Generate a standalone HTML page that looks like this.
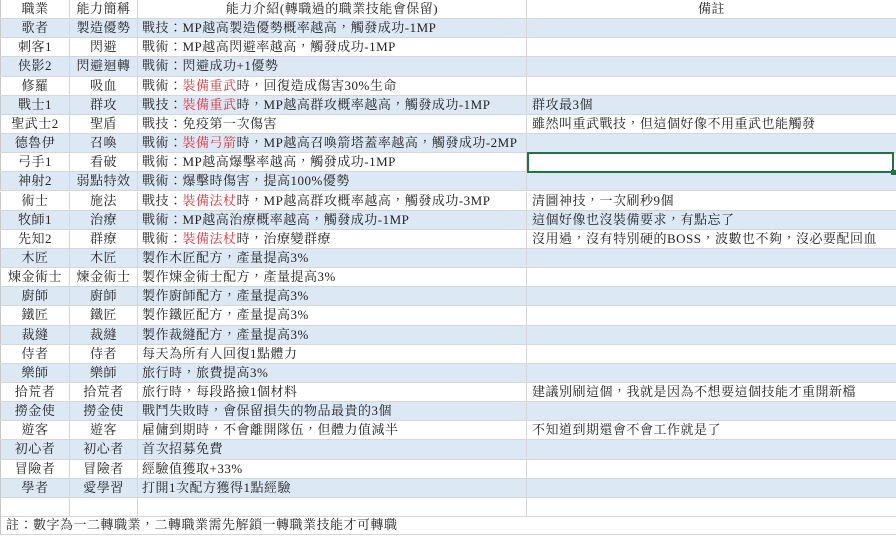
<!DOCTYPE html>
<html><head><meta charset="utf-8">
<style>
body{margin:0;width:896px;height:537px;overflow:hidden;background:#fff;font-family:"Liberation Serif","Noto Serif CJK TC","Noto Serif CJK SC",serif;font-size:13px;color:#222;letter-spacing:0.5px;}
.r{position:absolute;left:0;width:896px;height:19.15px;box-sizing:border-box;border-bottom:1px solid #d6d6d6;}
.b{background:#dde8f5;}
.c{position:absolute;top:0;height:100%;box-sizing:border-box;border-right:1px solid #d6d6d6;line-height:18px;white-space:nowrap;overflow:visible;}
.a{left:0;width:70px;text-align:center;border-left:1px solid #c8c8c8;}
.k{left:70px;width:68px;text-align:center;}
.d{left:138px;width:389px;padding-left:4px;}
.e{left:527px;width:369px;padding-left:5px;border-right:none;}
.red{color:#e0303a;}
.sel{position:absolute;left:527px;top:152px;width:367px;height:21px;border:2px solid #217346;box-sizing:border-box;}
.sel:after{content:"";position:absolute;right:-4px;bottom:-4px;width:5px;height:5px;background:#217346;}
.note{position:absolute;left:0;top:516px;width:896px;height:19px;line-height:18px;padding-left:5px;border-left:1px solid #c8c8c8;border-bottom:1px solid #d6d6d6;box-sizing:border-box;}
.d.h,.e.h{text-align:center;padding-left:0}
</style></head><body>
<div class="r" style="top:0"><div class="c a">職業</div><div class="c k">能力簡稱</div><div class="c d h">能力介紹(轉職過的職業技能會保留)</div><div class="c e h">備註</div></div>
<div class="r b" style="top:19.15px"><div class="c a">歌者</div><div class="c k">製造優勢</div><div class="c d">戰技：MP越高製造優勢概率越高，觸發成功-1MP</div><div class="c e"></div></div>
<div class="r" style="top:38.3px"><div class="c a">刺客1</div><div class="c k">閃避</div><div class="c d">戰術：MP越高閃避率越高，觸發成功-1MP</div><div class="c e"></div></div>
<div class="r b" style="top:57.45px"><div class="c a">侠影2</div><div class="c k">閃避迴轉</div><div class="c d">戰術：閃避成功+1優勢</div><div class="c e"></div></div>
<div class="r" style="top:76.6px"><div class="c a">修羅</div><div class="c k">吸血</div><div class="c d">戰術：<span class="red">裝備重武</span>時，回復造成傷害30%生命</div><div class="c e"></div></div>
<div class="r b" style="top:95.75px"><div class="c a">戰士1</div><div class="c k">群攻</div><div class="c d">戰技：<span class="red">裝備重武</span>時，MP越高群攻概率越高，觸發成功-1MP</div><div class="c e">群攻最3個</div></div>
<div class="r" style="top:114.9px"><div class="c a">聖武士2</div><div class="c k">聖盾</div><div class="c d">戰技：免疫第一次傷害</div><div class="c e">雖然叫重武戰技，但這個好像不用重武也能觸發</div></div>
<div class="r b" style="top:134.05px"><div class="c a">德魯伊</div><div class="c k">召喚</div><div class="c d">戰術：<span class="red">裝備弓箭</span>時，MP越高召喚箭塔蓋率越高，觸發成功-2MP</div><div class="c e"></div></div>
<div class="r" style="top:153.2px"><div class="c a">弓手1</div><div class="c k">看破</div><div class="c d">戰術：MP越高爆擊率越高，觸發成功-1MP</div><div class="c e"></div></div>
<div class="r b" style="top:172.35px"><div class="c a">神射2</div><div class="c k">弱點特效</div><div class="c d">戰術：爆擊時傷害，提高100%優勢</div><div class="c e"></div></div>
<div class="r" style="top:191.5px"><div class="c a">術士</div><div class="c k">施法</div><div class="c d">戰技：<span class="red">裝備法杖</span>時，MP越高群攻概率越高，觸發成功-3MP</div><div class="c e">清圖神技，一次刷秒9個</div></div>
<div class="r b" style="top:210.65px"><div class="c a">牧師1</div><div class="c k">治療</div><div class="c d">戰術：MP越高治療概率越高，觸發成功-1MP</div><div class="c e">這個好像也沒裝備要求，有點忘了</div></div>
<div class="r" style="top:229.8px"><div class="c a">先知2</div><div class="c k">群療</div><div class="c d">戰術：<span class="red">裝備法杖</span>時，治療變群療</div><div class="c e">沒用過，沒有特別硬的BOSS，波數也不夠，沒必要配回血</div></div>
<div class="r b" style="top:248.95px"><div class="c a">木匠</div><div class="c k">木匠</div><div class="c d">製作木匠配方，產量提高3%</div><div class="c e"></div></div>
<div class="r" style="top:268.1px"><div class="c a">煉金術士</div><div class="c k">煉金術士</div><div class="c d">製作煉金術士配方，產量提高3%</div><div class="c e"></div></div>
<div class="r b" style="top:287.25px"><div class="c a">廚師</div><div class="c k">廚師</div><div class="c d">製作廚師配方，產量提高3%</div><div class="c e"></div></div>
<div class="r" style="top:306.4px"><div class="c a">鐵匠</div><div class="c k">鐵匠</div><div class="c d">製作鐵匠配方，產量提高3%</div><div class="c e"></div></div>
<div class="r b" style="top:325.55px"><div class="c a">裁縫</div><div class="c k">裁縫</div><div class="c d">製作裁縫配方，產量提高3%</div><div class="c e"></div></div>
<div class="r" style="top:344.7px"><div class="c a">侍者</div><div class="c k">侍者</div><div class="c d">每天為所有人回復1點體力</div><div class="c e"></div></div>
<div class="r b" style="top:363.85px"><div class="c a">樂師</div><div class="c k">樂師</div><div class="c d">旅行時，旅費提高3%</div><div class="c e"></div></div>
<div class="r" style="top:383px"><div class="c a">拾荒者</div><div class="c k">拾荒者</div><div class="c d">旅行時，每段路撿1個材料</div><div class="c e">建議別刷這個，我就是因為不想要這個技能才重開新檔</div></div>
<div class="r b" style="top:402.15px"><div class="c a">撈金使</div><div class="c k">撈金使</div><div class="c d">戰鬥失敗時，會保留損失的物品最貴的3個</div><div class="c e"></div></div>
<div class="r" style="top:421.3px"><div class="c a">遊客</div><div class="c k">遊客</div><div class="c d">雇傭到期時，不會離開隊伍，但體力值減半</div><div class="c e">不知道到期還會不會工作就是了</div></div>
<div class="r b" style="top:440.45px"><div class="c a">初心者</div><div class="c k">初心者</div><div class="c d">首次招募免費</div><div class="c e"></div></div>
<div class="r" style="top:459.6px"><div class="c a">冒險者</div><div class="c k">冒險者</div><div class="c d">經驗值獲取+33%</div><div class="c e"></div></div>
<div class="r b" style="top:478.75px"><div class="c a">學者</div><div class="c k">愛學習</div><div class="c d">打開1次配方獲得1點經驗</div><div class="c e"></div></div>
<div class="r" style="top:497.9px"><div class="c a"></div><div class="c k"></div><div class="c d"></div><div class="c e"></div></div>
<div class="note">註：數字為一二轉職業，二轉職業需先解鎖一轉職業技能才可轉職</div>
<div class="sel"></div>
</body></html>
